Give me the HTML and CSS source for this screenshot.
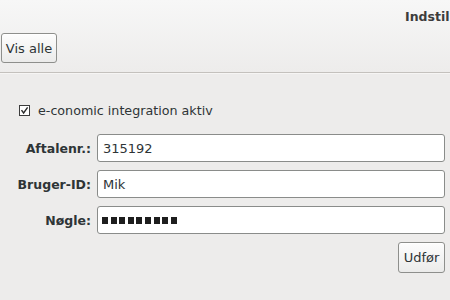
FILE: index.html
```html
<!DOCTYPE html>
<html>
<head>
<meta charset="utf-8">
<link rel="stylesheet" href="styles.css">
</head>
<body>
<div class="header">
  <div class="titlebar"><span class="title">Indstillinger</span></div>
  <div class="toolbar"><button class="btn">Vis alle</button></div>
</div>
<div class="content">
  <label class="check">
    <span class="box"><svg width="11" height="11" viewBox="0 0 11 11"><rect x="0.5" y="0.5" width="10" height="10" fill="#fff" stroke="#3c3c3c"/><path d="M2.5 5.2 L4.6 8 L8.6 2.4" fill="none" stroke="#2a2a2a" stroke-width="1.4"/></svg></span>
    <span>e-conomic integration aktiv</span>
  </label>
  <div class="form">
    <div class="lbl">Aftalenr.:</div>
    <div class="field">315192</div>
    <div class="lbl">Bruger-ID:</div>
    <div class="field">Mik</div>
    <div class="lbl">Nøgle:</div>
    <div class="field pw"><i></i><i></i><i></i><i></i><i></i><i></i><i></i><i></i><i></i></div>
  </div>
  <div class="actions"><button class="btn">Udfør</button></div>
</div>
</body>
</html>
```
FILE: styles.css
```css
html, body {
  margin: 0;
  padding: 0;
  width: 450px;
  height: 300px;
  overflow: hidden;
  background: #edeceb;
  font-family: "DejaVu Sans", sans-serif;
  font-size: 13px;
  color: #2e3436;
}
.header {
  height: 72px;
  background: linear-gradient(#f7f7f7, #edeceb);
  border-bottom: 1px solid #c4c1bd;
  box-shadow: 0 1px 0 #f6f5f4;
}
.titlebar {
  height: 33px;
  padding-left: 405px;
  white-space: nowrap;
  overflow: hidden;
  display: flex;
  align-items: center;
}
.title {
  font-weight: bold;
  color: #3c3c3c;
  font-size: 12.5px;
}
.toolbar {
  padding-left: 1px;
}
.btn {
  font-family: "DejaVu Sans", sans-serif;
  font-size: 13px;
  color: #2e3436;
  height: 30px;
  padding: 0;
  white-space: nowrap;
  border: 1px solid #8e8f8c;
  border-radius: 3px;
  background: linear-gradient(#fdfdfd, #ebebea);
  box-shadow: inset 0 1px 0 #fff;
  margin: 0;
}
.toolbar .btn { width: 56px; }
.content {
  padding: 30px 5px 0 13px;
}
.check {
  display: flex;
  align-items: center;
  gap: 8px;
  height: 14px;
  margin-left: 6px;
  font-size: 12.7px;
}
.box { display: flex; }
.form {
  margin-top: 17px;
  display: grid;
  grid-template-columns: 78px 348px;
  column-gap: 6px;
  row-gap: 8px;
  align-items: center;
}
.lbl {
  text-align: right;
  font-weight: bold;
  font-size: 12.5px;
  white-space: nowrap;
}
.field {
  height: 26px;
  background: #fff;
  border: 1px solid #8a8c8a;
  border-radius: 3px;
  display: flex;
  align-items: center;
  padding-left: 5px;
  font-size: 13px;
}
.pw { gap: 2.6px; padding-left: 4px; }
.pw i {
  display: block;
  width: 6px;
  height: 7px;
  background: #1e1e1e;
}
.actions {
  display: flex;
  justify-content: flex-end;
  padding-top: 8px;
}
.actions .btn { width: 47px; height: 31px; }
```
